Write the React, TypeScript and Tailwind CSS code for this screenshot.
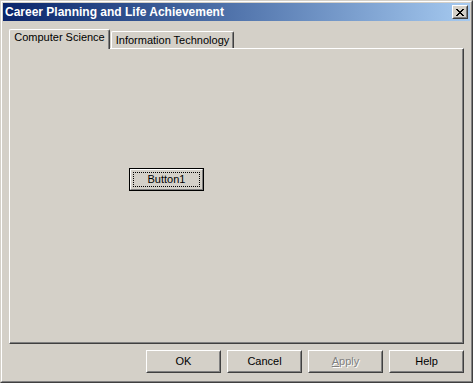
const face = "bg-[#d4d0c8]"

function Btn({ children, disabled }: { children: React.ReactNode; disabled?: boolean }) {
  return (
    <div className="w-[75px] h-[23px] border border-t-white border-l-white border-r-[#404040] border-b-[#404040]">
      <div
        className={`h-full border border-t-[#d4d0c8] border-l-[#d4d0c8] border-r-[#808080] border-b-[#808080] flex items-center justify-center ${
          disabled ? "text-[#808080] [text-shadow:1px_1px_0_#ffffff]" : "text-black"
        }`}
      >
        {children}
      </div>
    </div>
  )
}

function CloseGlyph() {
  const px = [
    [0, 0], [1, 0], [6, 0], [7, 0],
    [1, 1], [2, 1], [5, 1], [6, 1],
    [2, 2], [3, 2], [4, 2], [5, 2],
    [3, 3], [4, 3],
    [2, 4], [3, 4], [4, 4], [5, 4],
    [1, 5], [2, 5], [5, 5], [6, 5],
    [0, 6], [1, 6], [6, 6], [7, 6],
  ]
  return (
    <svg width="8" height="7" viewBox="0 0 8 7" shapeRendering="crispEdges">
      {px.map(([x, y], i) => (
        <rect key={i} x={x} y={y} width="1" height="1" fill="#000" />
      ))}
    </svg>
  )
}

export default function App() {
  return (
    <div
      className={`w-[473px] h-[383px] ${face} border border-t-[#d4d0c8] border-l-[#d4d0c8] border-r-[#404040] border-b-[#404040] text-[11px] leading-[13px]`}
      style={{ fontFamily: '"Liberation Sans", Arial, sans-serif' }}
    >
      <div className="h-full border border-t-white border-l-white border-r-[#808080] border-b-[#808080] p-px flex flex-col">
        {/* Title bar */}
        <div className="h-[18px] bg-gradient-to-r from-[#0a246a] to-[#a6caf0] flex items-center justify-between pl-[2px] pr-[2px]">
          <span className="text-white font-bold text-[12px] leading-[14px]">Career Planning and Life Achievement</span>
          <div className="w-[16px] h-[14px] border border-t-white border-l-white border-r-[#404040] border-b-[#404040] bg-[#d4d0c8]">
            <div className="h-full border border-t-[#d4d0c8] border-l-[#d4d0c8] border-r-[#808080] border-b-[#808080] flex items-center justify-center">
              <CloseGlyph />
            </div>
          </div>
        </div>

        {/* Body */}
        <div className="flex-1 flex flex-col px-[6px] pt-[8px] pb-[7px]">
          {/* Tabs */}
          <div className="h-[19px] flex items-end">
            <div className="relative z-10 -mb-px w-[101px] h-[20px] bg-[#d4d0c8] border-l border-t border-r border-l-white border-t-white border-r-[#404040] rounded-tl-[2px] rounded-tr-[2px] shadow-[inset_-1px_0_0_#808080] flex justify-center pt-px text-black">
              Computer Science
            </div>
            <div className="ml-px w-[123px] h-[17px] border-l border-t border-r border-l-white border-t-white border-r-[#404040] rounded-tl-[2px] rounded-tr-[2px] shadow-[inset_-1px_0_0_#808080] flex justify-center pt-[2px] text-black">
              Information Technology
            </div>
          </div>

          {/* Panel */}
          <div className="h-[296px] border border-t-white border-l-white border-r-[#404040] border-b-[#404040]">
            <div className="h-full border-r border-b border-r-[#808080] border-b-[#808080] pl-[119px] pt-[119px]">
              <div className="w-[75px] h-[23px] border border-black">
                <div className="h-full border border-t-white border-l-white border-r-[#808080] border-b-[#808080] p-[2px]">
                  <div className="h-full border border-dotted border-black flex items-center justify-center text-black">
                    Button1
                  </div>
                </div>
              </div>
            </div>
          </div>

          {/* Buttons */}
          <div className="mt-[6px] flex justify-end gap-[6px]">
            <Btn>OK</Btn>
            <Btn>Cancel</Btn>
            <Btn disabled>
              <span>
                <span className="underline">A</span>pply
              </span>
            </Btn>
            <Btn>Help</Btn>
          </div>
        </div>
      </div>
    </div>
  )
}
